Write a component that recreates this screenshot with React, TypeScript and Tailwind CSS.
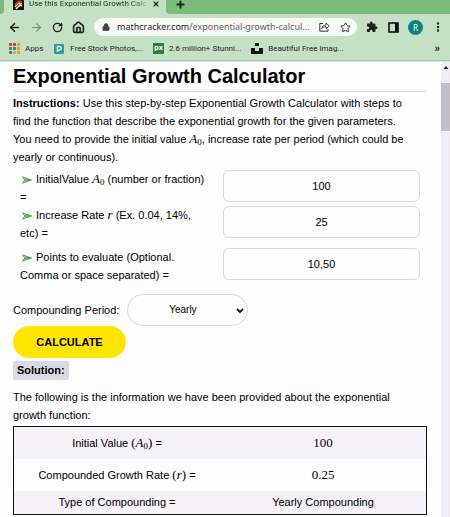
import type { ReactNode } from "react";
import {
  ArrowLeft,
  ArrowRight,
  RotateCw,
  House,
  Lock,
  Star,
  Plus,
  X,
  EllipsisVertical,
} from "lucide-react";
import { MdExtension } from "react-icons/md";

function Sym({ children, sub }: { children: string; sub?: string }) {
  return (
    <span className="font-['Liberation_Serif',serif] text-[13px] leading-none">
      <i>{children}</i>
      {sub && <span className="relative top-[2px] text-[9px]">{sub}</span>}
    </span>
  );
}

function Bullet() {
  return (
    <svg viewBox="0 0 11 8" className="mr-1 ml-[2px] inline h-2 w-[10px] align-[-1px]" aria-hidden="true">
      <path d="M0.5 0.5 L10.5 4 L0.5 7.5 L3 4 Z" fill="#a5dbab" stroke="#4aa556" strokeWidth="1" />
      <path d="M3 4 H9" stroke="#2f7d3a" strokeWidth="1" />
    </svg>
  );
}

function Field({ id, value, children }: { id: string; value: string; children: ReactNode }) {
  return (
    <div className="flex min-h-9 items-start justify-between gap-1 px-[7px]">
      <label htmlFor={id} className="min-w-0 flex-1">
        <Bullet />
        {children}
      </label>
      <input
        id={id}
        type="text"
        defaultValue={value}
        className="h-8 w-[197px] rounded-md border border-[#dcd6e8] bg-[#fdfdfd] text-center text-[11px]"
      />
    </div>
  );
}

function Tabs() {
  return (
    <div className="flex h-[14px] overflow-hidden bg-[#7bbb7c] font-[Roboto,sans-serif]">
      <div className="bg-[#c5e1c5]">
        <div className="h-full w-[4px] rounded-br-md bg-[#7bbb7c]" />
      </div>
      <div className="flex w-[162px] items-center bg-[#c5e1c5] pb-[6px] pl-[9px]">
        <svg viewBox="0 0 11 11" className="h-[11px] w-[11px] shrink-0" aria-hidden="true">
          <rect width="11" height="11" fill="#111" />
          <path d="M2 6 L6 2 L9 3" stroke="#e33" strokeWidth="1.5" fill="none" />
          <path d="M2 8 L6 4 L9 5" stroke="#fc3" strokeWidth="1.5" fill="none" />
          <path d="M3 10 L7 6 L9 7" stroke="#fff" strokeWidth="1.5" fill="none" />
        </svg>
        <span className="ml-[5px] w-[118px] shrink-0 bg-linear-to-r from-[#1c2b1c] from-85% to-[#9db99d] bg-clip-text text-[8px] leading-4 whitespace-nowrap text-transparent">
          Use this Exponential Growth Calc
        </span>
        <button aria-label="Close tab" className="ml-[5px]">
          <X size={8} strokeWidth={4} />
        </button>
      </div>
      <div className="bg-[#c5e1c5]">
        <div className="h-full w-[4px] rounded-bl-md bg-[#7bbb7c]" />
      </div>
      <button aria-label="New tab" className="ml-[5px] flex items-center pb-[6px]">
        <Plus size={11} strokeWidth={4} />
      </button>
    </div>
  );
}

function Toolbar() {
  return (
    <div className="flex h-[26px] items-center pr-[6px] pl-[8px]">
      <button aria-label="Back"><ArrowLeft size={13} strokeWidth={3} /></button>
      <button aria-label="Forward" className="ml-[9px] text-[#728872]"><ArrowRight size={13} strokeWidth={2} /></button>
      <button aria-label="Reload" className="ml-[9px]"><RotateCw size={11} strokeWidth={3} /></button>
      <button aria-label="Home" className="ml-[9px]"><House size={13} strokeWidth={3} /></button>
      <div className="ml-[9px] flex h-[18px] min-w-0 flex-1 items-center rounded-full bg-[#f6f9f4] pr-[6px] pl-[8px]">
        <Lock size={8} strokeWidth={3} fill="#444" className="shrink-0 text-[#444]" />
        <a href="#calculator" className="ml-[7px] min-w-0 flex-1 text-[9px] whitespace-nowrap text-[#1f1f1f]">
          mathcracker.com<span className="text-[#666]">/exponential-growth-calcul...</span>
        </a>
        <button aria-label="Share">
          <svg viewBox="0 0 11 10" className="h-[10px] w-[11px]" fill="none" stroke="#333" aria-hidden="true">
            <path d="M4 1.5 H0.8 V9.2 H9 V7" />
            <path d="M2.8 6.5 C3.2 4 5 3 7 3 V1 L10.3 4 L7 6.6 V4.8 C5 4.8 3.6 5.4 2.8 6.5 Z" strokeWidth="0.9" />
          </svg>
        </button>
        <button aria-label="Bookmark" className="ml-[10px]"><Star size={11} strokeWidth={2} /></button>
      </div>
      <button aria-label="Extensions" className="ml-[9px]"><MdExtension size={12} /></button>
      <button aria-label="Side panel" className="ml-[10px]">
        <svg viewBox="0 0 11 11" className="h-[11px] w-[11px]" aria-hidden="true">
          <rect x="1" y="1" width="9" height="9" fill="none" stroke="#111" strokeWidth="1.6" />
          <rect x="7" y="1" width="3" height="9" fill="#111" />
        </svg>
      </button>
      <button aria-label="Profile" className="ml-[9px] h-[15px] w-[15px] rounded-full bg-[#0b857c] text-[8px] leading-[15px] text-white">
        R
      </button>
      <button aria-label="Menu" className="ml-[9px]"><EllipsisVertical size={12} strokeWidth={3} /></button>
    </div>
  );
}

const dots = ["#e33b2e", "#e33b2e", "#e8a13a", "#2f9a55", "#3b78d8", "#e8a13a", "#2f9a55", "#e8a13a", "#e8a13a"];

function Bookmarks() {
  return (
    <div className="flex h-[21px] items-center border-b border-[#a3cda8] pr-[10px] pb-[3px] pl-[9px] font-[Roboto,sans-serif] text-[8px] whitespace-nowrap">
      <a href="#apps" className="flex items-center gap-[5px]">
        <span className="grid grid-cols-3 gap-[1px]">
          {dots.map((c, i) => (
            <span key={i} className="h-[3px] w-[3px]" style={{ background: c }} />
          ))}
        </span>
        Apps
      </a>
      <a href="#photos" className="ml-[11px] flex items-center gap-[6px]">
        <svg viewBox="0 0 10 10" className="h-[10px] w-[10px]" aria-hidden="true">
          <rect width="10" height="10" rx="1" fill="#2f9b94" />
          <path d="M3.4 8 V2.5 H5.3 A1.8 1.8 0 0 1 5.3 6.1 H3.4" fill="none" stroke="#fff" strokeWidth="1.3" />
        </svg>
        Free Stock Photos,...
      </a>
      <a href="#stunning" className="ml-[10px] flex items-center gap-[5px]">
        <span className="h-[11px] w-[11px] bg-[#2d7f3c] text-center text-[8px] leading-[9px] font-bold text-white">px</span>
        2.6 million+ Stunni...
      </a>
      <a href="#beautiful" className="ml-[10px] flex items-center gap-[5px]">
        <svg viewBox="0 0 12 11" className="h-[11px] w-[12px]" aria-hidden="true">
          <path d="M4 0 H8 V3 H4 Z M0 5 H4 V8 H8 V5 H12 V11 H0 Z" fill="#111" />
        </svg>
        Beautiful Free Imag...
      </a>
      <button aria-label="More bookmarks" className="ml-auto text-[11px] leading-none font-bold">»</button>
    </div>
  );
}

const num = "font-['Liberation_Serif',serif] text-[13px] leading-none";

export default function App() {
  return (
    <div className="flex h-screen flex-col overflow-hidden bg-[#fdfdfd] text-black">
      <header className="shrink-0 bg-[#c5e1c5] font-['Noto_Sans','Open_Sans',sans-serif] text-[#1c241c]">
        <Tabs />
        <Toolbar />
        <Bookmarks />
      </header>
      <div className="flex min-h-0 flex-1 border-t border-[#dddde2]">
        <main id="calculator" className="min-w-0 flex-1 overflow-hidden pr-[14px] pl-[13px] font-['Liberation_Sans',Arial,sans-serif] text-[11px] leading-[18px]">
          <h1 className="border-b border-[#dad9ea] text-[20px] leading-[29px] font-bold">Exponential Growth Calculator</h1>
          <p className="mt-[2px]">
            <b>Instructions:</b> Use this step-by-step Exponential Growth Calculator with steps to
            <br />
            find the function that describe the exponential growth for the given parameters.
            <br />
            You need to provide the initial value <Sym sub="0">A</Sym>, increase rate per period (which could be
            <br />
            yearly or continuous).
          </p>
          <form onSubmit={(e) => e.preventDefault()}>
            <div className="mt-[4px]">
              <Field id="initial" value="100">
                InitialValue <Sym sub="0">A</Sym> (number or fraction)
                <br />=
              </Field>
              <Field id="rate" value="25">
                Increase Rate <Sym>r</Sym> (Ex. 0.04, 14%,
                <br />
                etc) =
              </Field>
            </div>
            <div className="mt-[6px]">
              <Field id="points" value="10,50">
                Points to evaluate (Optional.
                <br />
                Comma or space separated) =
              </Field>
            </div>
            <div className="mt-[10px] flex items-center gap-[8px]">
              <label htmlFor="period">Compounding Period:</label>
              <div className="relative">
                <select
                  id="period"
                  className="block h-8 w-[121px] appearance-none rounded-full border border-[#dcd6e8] bg-[#fdfdfd] pr-[10px] text-center text-[10px]"
                >
                  <option>Yearly</option>
                  <option>Continuous</option>
                </select>
                <svg viewBox="0 0 8 6" className="pointer-events-none absolute top-[14px] right-[4px] h-[6px] w-[8px]" aria-hidden="true">
                  <path d="M1 1 L4 4 L7 1" fill="none" stroke="#111" strokeWidth="1.8" />
                </svg>
              </div>
            </div>
            <button type="submit" className="block h-8 w-[113px] rounded-full bg-[#ffe500] text-[11px] font-bold">CALCULATE</button>
          </form>
          <h2 className="mt-[3px] w-fit rounded-xs bg-[#dadae6] px-[4px] pb-px font-bold">Solution:</h2>
          <p className="mt-[8px]">
            The following is the information we have been provided about the exponential
            <br />
            growth function:
          </p>
          <table className="mt-[2px] w-full border border-[#111] text-center">
            <tbody>
              <tr className="h-[32px] bg-[#f5f2f8]">
                <th scope="row" className="w-1/2 p-0 font-normal">
                  Initial Value <span className={num}>(<Sym sub="0">A</Sym>)</span> =
                </th>
                <td className="w-1/2 p-0"><span className={num}>100</span></td>
              </tr>
              <tr className="h-[32px]">
                <th scope="row" className="p-0 font-normal">
                  Compounded Growth Rate <span className={num}>(<Sym>r</Sym>)</span> =
                </th>
                <td className="p-0"><span className={num}>0.25</span></td>
              </tr>
              <tr className="h-[24px] bg-[#f5f2f8]">
                <th scope="row" className="p-0 font-normal">Type of Compounding =</th>
                <td className="p-0">Yearly Compounding</td>
              </tr>
            </tbody>
          </table>
        </main>
        <div className="flex w-[9px] flex-col items-center bg-[#f1edf5]" aria-hidden="true">
          <svg viewBox="0 0 9 21" className="h-[21px] w-[9px]">
            <path d="M2.5 7 L5 4 L7.5 7 Z" fill="#222" />
          </svg>
          <div className="h-12 w-full bg-[#c1bfc3]" />
        </div>
      </div>
    </div>
  );
}
